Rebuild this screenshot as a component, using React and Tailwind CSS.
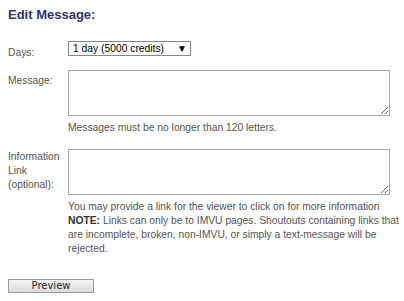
export default function App() {
  return (
    <div className="w-[404px] h-[301px] bg-white px-2 pt-[7px] font-['Liberation_Sans',Arial,sans-serif] text-[10.3px] text-[#555]">
      <h1 className="text-[13px] font-bold text-[#33337a] leading-[15px]">Edit Message:</h1>

      <div className="mt-[19px] grid grid-cols-[60px_324px]">
        {/* Days */}
        <div className="pt-[5px] leading-[14px]">Days:</div>
        <div className="pb-[14px]">
          <div className="w-[123px] h-[15px] border border-[#888] flex items-center justify-between pl-[4px] pr-[3px] text-black leading-[13px]">
            <span>1 day (5000 credits)</span>
            <span className="text-[10px]">▼</span>
          </div>
        </div>

        {/* Message */}
        <div className="pt-[4px] leading-[14px]">Message:</div>
        <div className="pb-[14px]">
          <textarea className="block w-[322px] h-[46px] border border-[#a9a9a9] bg-white resize-y" />
          <div className="mt-[5px] leading-[14px]">Messages must be no longer than 120 letters.</div>
        </div>

        {/* Info link */}
        <div className="pt-[1px] leading-[14px]">
          Information<br />Link<br />(optional):
        </div>
        <div>
          <textarea className="block w-[322px] h-[46px] border border-[#a9a9a9] bg-white resize-y" />
          <div className="mt-[5px] leading-[14px] whitespace-nowrap">
            You may provide a link for the viewer to click on for more information<br />
            <b className="text-[#333]">NOTE:</b> Links can only be to IMVU pages. Shoutouts containing links that<br />
            are incomplete, broken, non-IMVU, or simply a text-message will be<br />
            rejected.
          </div>
        </div>
      </div>

      <button className="mt-[23px] w-[86px] h-[14px] border border-[#9a9a9a] bg-gradient-to-b from-[#f4f4f4] to-[#dcdcdc] font-['DejaVu_Sans',sans-serif] text-[10px] leading-[12px] text-[#222] flex items-center justify-center">
        Preview
      </button>
    </div>
  )
}
